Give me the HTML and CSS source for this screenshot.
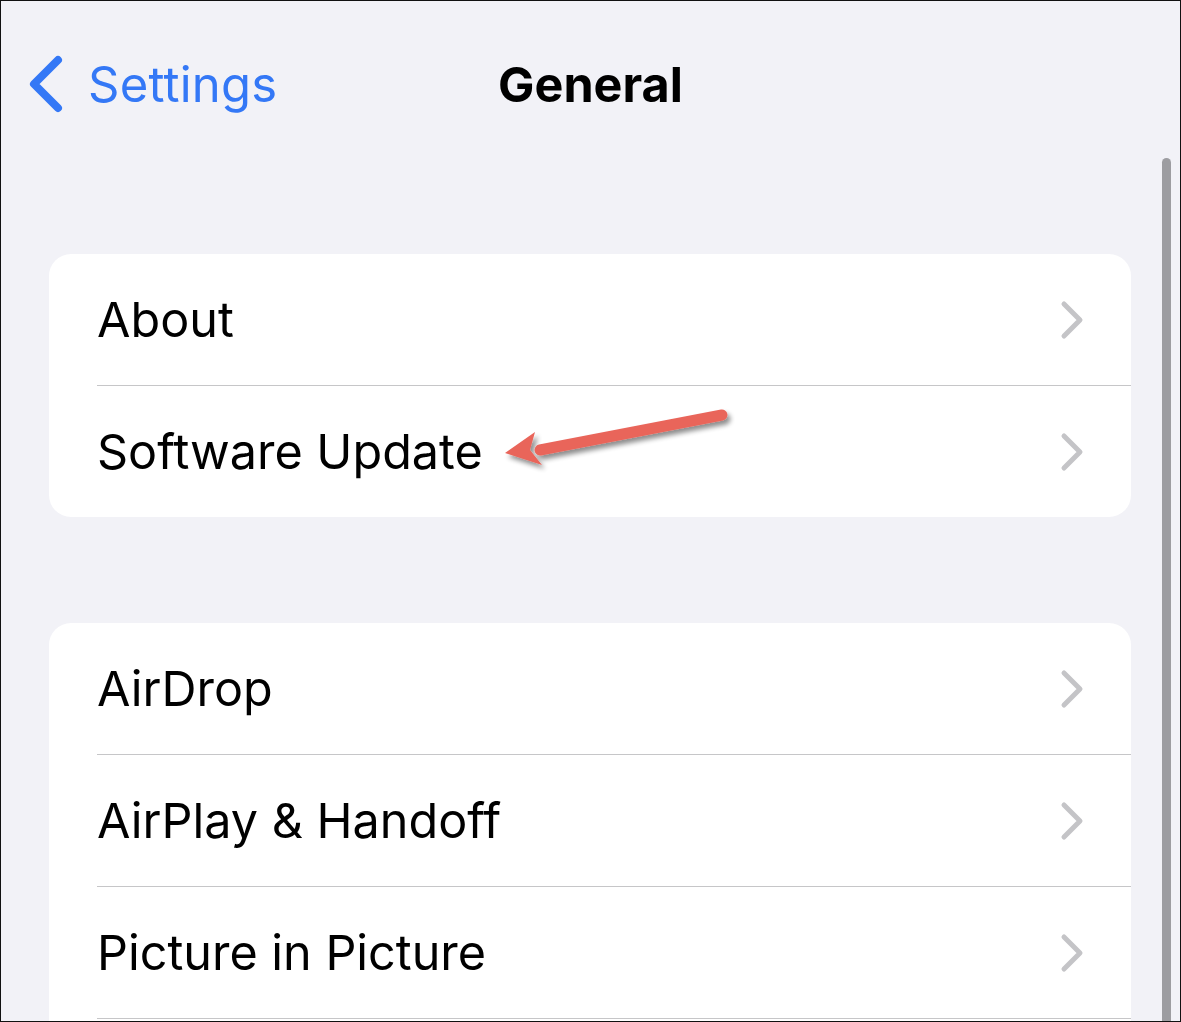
FILE: index.html
```html
<!DOCTYPE html>
<html>
<head>
<meta charset="utf-8">
<link rel="stylesheet" href="styles.css">
</head>
<body>
<div class="screen">
  <header class="navbar">
    <div class="nav-left">
      <svg class="back-icon" width="40" height="60" viewBox="0 0 40 60"><path d="M31 6 L7 30 L31 54" fill="none" stroke="#3478f6" stroke-width="8" stroke-linecap="round" stroke-linejoin="round"/></svg>
      <span class="back-label">Settings</span>
    </div>
    <h1 class="title">General</h1>
    <div class="nav-right"></div>
  </header>
  <main class="content">
    <section class="card">
      <div class="row"><div class="row-inner"><span class="label">About</span><svg class="chev" width="24" height="40" viewBox="0 0 24 40"><path d="M4 4 L20 20 L4 36" fill="none" stroke="#c4c4c7" stroke-width="5" stroke-linecap="round" stroke-linejoin="round"/></svg></div></div>
      <div class="row"><div class="row-inner"><span class="label">Software Update</span><svg class="chev" width="24" height="40" viewBox="0 0 24 40"><path d="M4 4 L20 20 L4 36" fill="none" stroke="#c4c4c7" stroke-width="5" stroke-linecap="round" stroke-linejoin="round"/></svg></div></div>
    </section>
    <section class="card card-continues">
      <div class="row"><div class="row-inner"><span class="label">AirDrop</span><svg class="chev" width="24" height="40" viewBox="0 0 24 40"><path d="M4 4 L20 20 L4 36" fill="none" stroke="#c4c4c7" stroke-width="5" stroke-linecap="round" stroke-linejoin="round"/></svg></div></div>
      <div class="row"><div class="row-inner"><span class="label">AirPlay &amp; Handoff</span><svg class="chev" width="24" height="40" viewBox="0 0 24 40"><path d="M4 4 L20 20 L4 36" fill="none" stroke="#c4c4c7" stroke-width="5" stroke-linecap="round" stroke-linejoin="round"/></svg></div></div>
      <div class="row row-continues"><div class="row-inner"><span class="label">Picture in Picture</span><svg class="chev" width="24" height="40" viewBox="0 0 24 40"><path d="M4 4 L20 20 L4 36" fill="none" stroke="#c4c4c7" stroke-width="5" stroke-linecap="round" stroke-linejoin="round"/></svg></div></div>
    </section>
  </main>
  <div class="scrollbar"></div>
  <svg class="annotation" width="260" height="90" viewBox="0 0 260 90">
    <defs>
      <filter id="sh" x="-20%" y="-40%" width="140%" height="180%">
        <feGaussianBlur in="SourceAlpha" stdDeviation="2.5"/>
        <feOffset dx="3" dy="4" result="b"/>
        <feComponentTransfer><feFuncA type="linear" slope="0.45"/></feComponentTransfer>
        <feMerge><feMergeNode/><feMergeNode in="SourceGraphic"/></feMerge>
      </filter>
    </defs>
    <g filter="url(#sh)">
      <path d="M242 25 L60 60" stroke="#e9655a" stroke-width="11" stroke-linecap="round" fill="none"/>
      <path d="M25 63 L55 42 L50 60 L62 75 Z" fill="#e9655a"/>
    </g>
  </svg>
</div>
</body>
</html>
```

FILE: styles.css
```css
* { box-sizing: border-box; }
html, body { margin: 0; padding: 0; }
body { background: #ffffff; font-family: "Inter", "Noto Sans", sans-serif; }

.screen {
  position: relative;
  width: 1181px;
  height: 1022px;
  border: 1px solid #111;
  background: #f2f2f7;
  overflow: hidden;
}

.navbar {
  height: 166px;
  display: grid;
  grid-template-columns: 1fr auto 1fr;
  align-items: center;
}

.nav-left {
  display: flex;
  align-items: center;
  padding-left: 26px;
  gap: 21px;
}

.back-icon { display: block; }

.back-label {
  color: #3478f6;
  font-size: 49px;
  letter-spacing: 0.2px;
}

.title {
  margin: 0;
  font-size: 48.5px;
  font-weight: 700;
  color: #000;
}

.content {
  padding: 87px 49px 0 48px;
  display: flex;
  flex-direction: column;
  gap: 106px;
}

.card {
  background: #fff;
  border-radius: 22px;
  overflow: hidden;
}

.card-continues { padding-bottom: 60px; }

.row { padding-left: 48px; }

.row-inner {
  height: 132px;
  display: flex;
  align-items: center;
  justify-content: space-between;
  padding-left: 0;
  padding-right: 47px;
  border-bottom: 1px solid #c6c6c8;
}

.card .row:last-child .row-inner { border-bottom: none; height: 131px; }
.card .row.row-continues .row-inner { border-bottom: 1px solid #c6c6c8; height: 132px; }

.label {
  font-size: 48.5px;
  color: #000;
}

.chev { display: block; }

.scrollbar {
  position: absolute;
  left: 1161px;
  top: 157px;
  width: 9px;
  height: 900px;
  border-radius: 5px;
  background: #9d9da1;
}

.annotation {
  position: absolute;
  left: 479px;
  top: 389px;
}
```
